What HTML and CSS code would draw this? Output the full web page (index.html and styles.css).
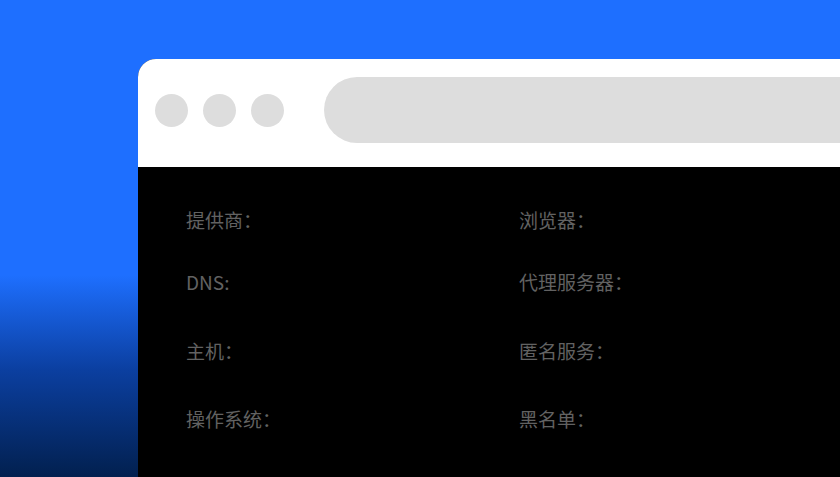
FILE: index.html
```html
<!DOCTYPE html>
<html lang="zh">
<head>
<meta charset="utf-8">
<link rel="stylesheet" href="styles.css">
</head>
<body>
<div class="window">
  <div class="titlebar">
    <div class="dots">
      <span class="dot"></span>
      <span class="dot"></span>
      <span class="dot"></span>
    </div>
    <div class="address"></div>
  </div>
  <div class="content">
    <div class="grid">
      <div class="label">提供商：</div>
      <div class="label">浏览器：</div>
      <div class="label">DNS:</div>
      <div class="label">代理服务器：</div>
      <div class="label">主机：</div>
      <div class="label">匿名服务：</div>
      <div class="label">操作系统：</div>
      <div class="label">黑名单：</div>
    </div>
  </div>
</div>
</body>
</html>
```
FILE: styles.css
```css
html, body {
  margin: 0;
  padding: 0;
  width: 840px;
  height: 477px;
  overflow: hidden;
}
body {
  background: linear-gradient(to bottom, #1e6fff 0px, #1e6fff 275px, #0b3fa0 370px, #02204f 477px);
  font-family: "Noto Sans CJK SC", "Noto Sans", sans-serif;
}
.window {
  margin-left: 138px;
  margin-top: 59px;
  width: 702px;
  height: 418px;
  border-top-left-radius: 18px;
  overflow: hidden;
  background: #000;
}
.titlebar {
  height: 108px;
  box-sizing: border-box;
  background: #fff;
  display: flex;
  align-items: flex-start;
  padding-top: 18px;
  padding-left: 17px;
}
.dots {
  display: flex;
  gap: 15px;
  margin-top: 17px;
}
.dot {
  width: 33px;
  height: 33px;
  border-radius: 50%;
  background: #dddddd;
}
.address {
  margin-left: 40px;
  flex: 1;
  height: 66px;
  border-radius: 33px 0 0 33px;
  background: #dddddd;
}
.content {
  padding-top: 40px;
  padding-left: 48px;
}
.grid {
  display: grid;
  grid-template-columns: 333px 300px;
  grid-template-rows: 62px 69px 68px 68px;
}
.label {
  color: #626262;
  font-size: 19px;
  line-height: 26px;
}
```
